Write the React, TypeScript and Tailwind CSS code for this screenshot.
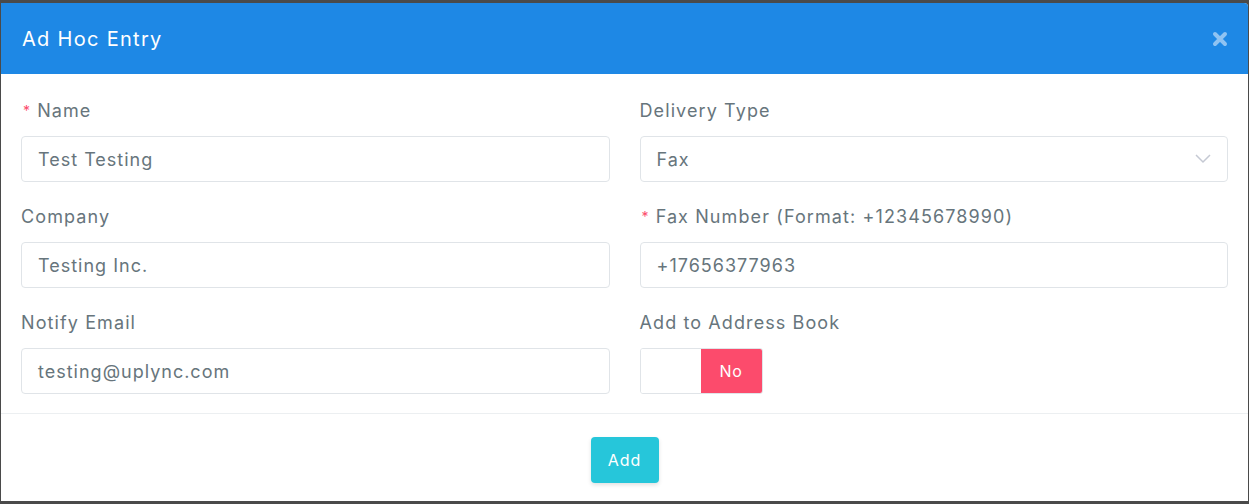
import React from "react";

const font = { fontFamily: "Inter, 'Open Sans', 'Liberation Sans', sans-serif" };

function Label({ text, required }: { text: string; required?: boolean }) {
  return (
    <label className="block text-[18px] leading-[27px] tracking-[1.1px] text-[#67757c] mb-[12px]">
      {required && <span className="text-[#fc4b6c] text-[14px] align-top ml-[2px] mr-[6px]">*</span>}
      {text}
    </label>
  );
}

function TextInput({ value }: { value: string }) {
  return (
    <div className="h-[46px] border border-[#e0e4e8] rounded-[4px] px-[16px] flex items-center text-[18px] tracking-[1px] text-[#67757c]">
      {value}
    </div>
  );
}

export default function App() {
  return (
    <div className="w-[1249px] h-[504px] bg-[#4a4a4a] pt-[3px] pb-[3px] pl-[1px] pr-[1px]" style={font}>
      <div className="bg-white h-full rounded-tr-[4px] overflow-hidden flex flex-col">
        <div className="h-[71px] bg-[#1e88e5] flex items-center justify-between pl-[21px] pr-[20px]">
          <h4 className="text-white text-[20px] tracking-[1.3px]">Ad Hoc Entry</h4>
          <svg width="16" height="16" viewBox="0 0 16 16" className="opacity-50">
            <path d="M3 3 L13 13 M13 3 L3 13" stroke="#ffffff" strokeWidth="4" strokeLinecap="round" />
          </svg>
        </div>
        <div className="px-[20px] pt-[23px] pb-[19px] grid grid-cols-2 gap-x-[30px] gap-y-[21px]">
          <div>
            <Label text="Name" required />
            <TextInput value="Test Testing" />
          </div>
          <div>
            <Label text="Delivery Type" />
            <div className="h-[46px] border border-[#e0e4e8] rounded-[4px] px-[16px] flex items-center justify-between text-[18px] tracking-[1px] text-[#67757c]">
              <span>Fax</span>
              <svg width="16" height="10" viewBox="0 0 16 10">
                <path d="M1 1 L8 8 L15 1" fill="none" stroke="#c5c9d3" strokeWidth="1.5" />
              </svg>
            </div>
          </div>
          <div>
            <Label text="Company" />
            <TextInput value="Testing Inc." />
          </div>
          <div>
            <Label text="Fax Number (Format: +12345678990)" required />
            <TextInput value="+17656377963" />
          </div>
          <div>
            <Label text="Notify Email" />
            <TextInput value="testing@uplync.com" />
          </div>
          <div>
            <Label text="Add to Address Book" />
            <div className="w-[123px] h-[46px] border border-[#e0e4e8] rounded-[3px] flex overflow-hidden">
              <div className="w-[60px] bg-white" />
              <div className="flex-1 bg-[#fc4b6c] text-white text-[16px] tracking-[0.6px] flex items-center justify-center">No</div>
            </div>
          </div>
        </div>
        <div className="border-t border-[#eceff1] flex-1 flex items-center justify-center">
          <button className="w-[68px] h-[46px] bg-[#26c6da] text-white text-[16px] tracking-[1px] rounded-[4px] shadow-[0_2px_4px_rgba(0,0,0,0.12)] mt-[4px]">
            Add
          </button>
        </div>
      </div>
    </div>
  );
}
